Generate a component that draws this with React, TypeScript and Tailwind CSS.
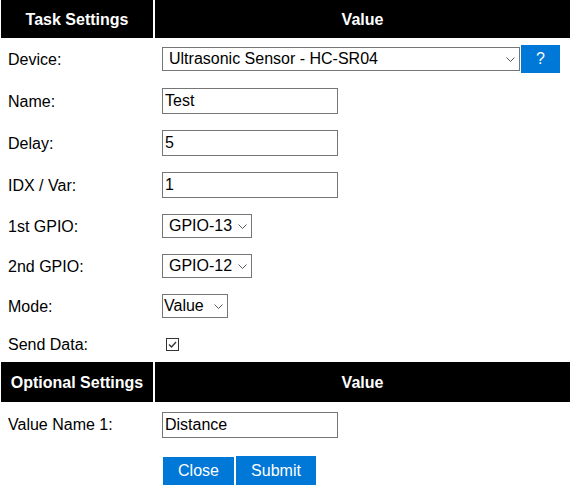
import React from 'react';

const font = { fontFamily: '"Liberation Sans", Arial, sans-serif' };

function Chevron() {
	return (
		<svg width="9" height="5" viewBox="0 0 9 5" className="shrink-0">
			<path d="M0.5 0.5 L4.5 4.5 L8.5 0.5" fill="none" stroke="#5a5a5a" strokeWidth="1" />
		</svg>
	);
}

function FakeSelect({ value, width, padLeft }: { value: string; width: string; padLeft: string }) {
	return (
		<div className={`h-6 border border-[#767676] bg-white flex items-center justify-between pr-[4px] ${width} ${padLeft}`}>
			<span className="text-black leading-none whitespace-nowrap">{value}</span>
			<Chevron />
		</div>
	);
}

function TextBox({ value }: { value: string }) {
	return <div className="w-[176px] h-[26px] border border-[#767676] bg-white px-[2px] flex items-center text-black leading-none">{value}</div>;
}

function Header({ title, h }: { title: string; h: string }) {
	return (
		<>
			<div className={`bg-black text-white font-bold flex items-center justify-center pt-px ${h}`}>{title}</div>
			<div className={`bg-black text-white font-bold flex items-center justify-center pt-px ${h}`}>Value</div>
		</>
	);
}

function Row({ label, h, children }: { label: string; h: string; children?: React.ReactNode }) {
	return (
		<>
			<div className={`flex items-center pl-[7px] pt-px text-black ${h}`}>{label}</div>
			<div className={`flex items-center pl-[7px] ${h}`}>{children}</div>
		</>
	);
}

export default function App() {
	return (
		<div style={font} className="w-[570px] h-[504px] bg-white text-[16px] overflow-hidden">
			<div className="grid grid-cols-[152px_1fr] gap-x-[2px] pl-[1px]">
				<Header title="Task Settings" h="h-[38px]" />

				<Row label="Device:" h="h-[42px]">
					<div className="flex items-center gap-px">
						<FakeSelect value="Ultrasonic Sensor - HC-SR04" width="w-[358px]" padLeft="pl-[6px]" />
						<button className="w-[39px] h-[28px] bg-[#0078d7] text-white flex items-center justify-center">?</button>
					</div>
				</Row>
				<Row label="Name:" h="h-[42px]">
					<TextBox value="Test" />
				</Row>
				<Row label="Delay:" h="h-[42px]">
					<TextBox value="5" />
				</Row>
				<Row label="IDX / Var:" h="h-[42px]">
					<TextBox value="1" />
				</Row>
				<Row label="1st GPIO:" h="h-[40px]">
					<FakeSelect value="GPIO-13" width="w-[90px]" padLeft="pl-[6px]" />
				</Row>
				<Row label="2nd GPIO:" h="h-[40px]">
					<FakeSelect value="GPIO-12" width="w-[90px]" padLeft="pl-[6px]" />
				</Row>
				<Row label="Mode:" h="h-[40px]">
					<FakeSelect value="Value" width="w-[66px]" padLeft="pl-[1px]" />
				</Row>
				<Row label="Send Data:" h="h-[36px]">
					<div className="ml-[4px] w-[13px] h-[13px] border border-[#333] bg-white flex items-center justify-center">
						<svg width="11" height="11" viewBox="0 0 11 11">
							<path d="M2 5.5 L4.5 8 L9 3" fill="none" stroke="#333" strokeWidth="1.3" />
						</svg>
					</div>
				</Row>

				<Header title="Optional Settings" h="h-[40px]" />

				<Row label="Value Name 1:" h="h-[45px]">
					<TextBox value="Distance" />
				</Row>
				<div className="h-[38px]" />
				<div className="h-[38px] flex items-end pl-[8px] gap-[2px]">
					<button className="w-[71px] h-[28px] bg-[#0078d7] text-white flex items-center justify-center">Close</button>
					<button className="w-[80px] h-[29px] bg-[#0078d7] text-white flex items-center justify-center">Submit</button>
				</div>
			</div>
		</div>
	);
}
